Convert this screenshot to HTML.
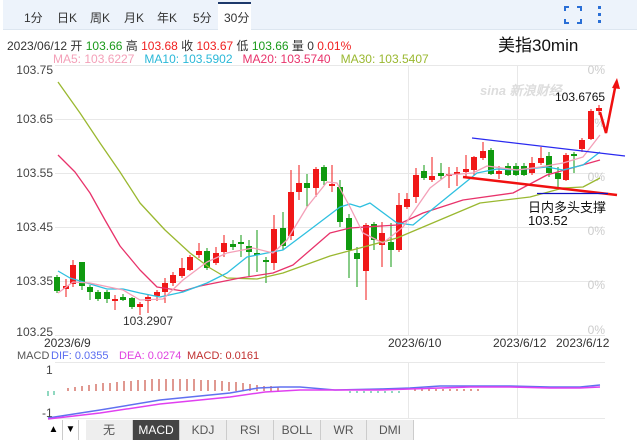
<!DOCTYPE html>
<html><head><meta charset="utf-8"><style>
*{margin:0;padding:0;box-sizing:border-box}
body{width:640px;height:440px;background:#fff;font-family:"Liberation Sans","Noto Sans CJK SC",sans-serif;position:relative;overflow:hidden}
.top{position:absolute;left:3px;top:0;width:498px;height:30px;background:#edf3fb;border-bottom:1px solid #dde6f0}
.top2{position:absolute;left:501px;top:0;width:136px;height:30px;background:#edf3fb;border-bottom:1px solid #dde6f0}
.tab{position:absolute;top:9px;font-size:12px;color:#333}
.sel{position:absolute;left:218px;top:2px;width:33px;height:29px;background:#fff;border-top:2px solid #1f3a6b}
.t{position:absolute;white-space:nowrap}
.bt{position:absolute;top:420px;height:20px;font-size:12px;color:#555;text-align:center;line-height:20px;background:#eee;border-right:1px solid #ccc}
</style></head><body>
<div class="top"></div><div class="top2"></div>
<div class="sel"></div>
<div class="tab" style="left:24px">1分</div>
<div class="tab" style="left:57px">日K</div>
<div class="tab" style="left:90px">周K</div>
<div class="tab" style="left:124px">月K</div>
<div class="tab" style="left:157px">年K</div>
<div class="tab" style="left:193px">5分</div>
<div class="tab" style="left:224px">30分</div>
<svg style="position:absolute;left:0;top:0" width="640" height="440">
<g stroke="#2a6fd6" stroke-width="2" fill="none"><path d="M565 11V7h4M577 7h4v4M581 19v4h-4M569 23h-4v-4"/></g>
<g fill="#2a6fd6"><rect x="598" y="6" width="3" height="3"/><rect x="598" y="13" width="3" height="3"/><rect x="598" y="20" width="3" height="3"/></g>
</svg>
<div class="t" style="left:7px;top:37px;font-size:12px;color:#333">2023/06/12 开 <span style="color:#1a9a1a">103.66</span> 高 <span style="color:#f02020">103.68</span> 收 <span style="color:#f02020">103.67</span> 低 <span style="color:#1a9a1a">103.66</span> 量 0 <span style="color:#f02020">0.01%</span></div>
<div class="t" style="left:498px;top:31px;font-size:17px;color:#111">美指30min</div>
<div class="t" style="left:53px;top:52px;font-size:12px"><span style="color:#f4a0b8">MA5: 103.6227</span>&nbsp;&nbsp; <span style="color:#2ab8d8">MA10: 103.5902</span>&nbsp;&nbsp; <span style="color:#e8336b">MA20: 103.5740</span>&nbsp;&nbsp; <span style="color:#9ab830">MA30: 103.5407</span></div>
<svg style="position:absolute;left:0;top:0" width="640" height="440" font-family="Liberation Sans, sans-serif">
<g stroke="#e8e8e8" stroke-width="1">
<line x1="55" y1="65.5" x2="605" y2="65.5"/><line x1="55" y1="119.5" x2="605" y2="119.5"/><line x1="55" y1="173.5" x2="605" y2="173.5"/><line x1="55" y1="227.5" x2="605" y2="227.5"/><line x1="55" y1="281.5" x2="605" y2="281.5"/><line x1="55" y1="335.5" x2="605" y2="335.5"/>
<line x1="408.5" y1="65" x2="408.5" y2="335"/><line x1="517.5" y1="65" x2="517.5" y2="335"/>
<line x1="408.5" y1="362" x2="408.5" y2="418"/><line x1="517.5" y1="362" x2="517.5" y2="418"/>
<line x1="55" y1="362.5" x2="605" y2="362.5"/><line x1="55" y1="418.5" x2="605" y2="418.5"/>
</g>
<g font-size="12" fill="#444" text-anchor="end">
<text x="53" y="74">103.75</text><text x="53" y="123">103.65</text><text x="53" y="177">103.55</text><text x="53" y="231">103.45</text><text x="53" y="285">103.35</text><text x="53" y="336">103.25</text>
</g>
<g font-size="12" fill="#ccc" text-anchor="end">
<text x="605" y="74">0%</text><text x="605" y="127">0%</text><text x="605" y="181">0%</text><text x="605" y="235">0%</text><text x="605" y="289">0%</text><text x="605" y="334">0%</text>
</g>
<text x="480" y="95" font-size="13" font-style="italic" font-weight="bold" fill="#ddd">sina 新浪财经</text>
<g id="c"></g>
<g fill="none" stroke-width="1.3" stroke-linejoin="round">
<polyline stroke="#9ab830" points="58,82 80,113 100,143 120,172 140,203 165,230 190,253 210,268 227,278 257,279 283,273 330,256 397,238 480,203 530,197 563,188 583,187 600,178"/>
<polyline stroke="#e8336b" points="58,155 75,172 90,193 105,220 120,246 140,270 157,287 183,291 200,286 240,278 273,273 293,265 330,233 350,228 397,225 423,213 463,200 513,193 547,175 600,160"/>
<polyline stroke="#2ec0e0" points="58,271 70,278 107,289 123,289 140,293 160,297 183,292 207,283 227,273 247,257 267,253 283,250 307,232 340,207 350,204 360,207 370,203 397,223 413,225 440,203 477,173 497,169 517,170 547,167 563,170 583,165 600,152"/>
<polyline stroke="#f4a0b8" points="58,293 73,282 90,283 123,290 140,300 163,299 183,280 207,262 227,253 253,248 273,253 287,240 307,207 327,182 337,183 350,207 363,233 383,243 403,227 430,188 447,175 473,173 487,166 517,170 540,167 563,163 583,157 600,135"/>
</g>
<line x1="472" y1="138" x2="625" y2="156" stroke="#2a2af0" stroke-width="1.2"/>
<line x1="463" y1="177" x2="617" y2="195" stroke="#f01010" stroke-width="2.5"/>
<line x1="537" y1="193.5" x2="608" y2="193.5" stroke="#1010c0" stroke-width="1.2"/>
<polyline points="600,112 606,133 616,83" fill="none" stroke="#f01010" stroke-width="2.5"/>
<polygon points="617,78 612,88 620,89" fill="#f01010"/>
<text x="528" y="212" font-size="13" fill="#111" font-family="Liberation Sans, Noto Sans CJK SC, sans-serif">日内多头支撑</text>
<text x="528" y="225" font-size="13" fill="#111">103.52</text>
<text x="555" y="101" font-size="12" fill="#111">103.6765</text>
<text x="123" y="325" font-size="12" fill="#333">103.2907</text>
<g font-size="12" fill="#333">
<text x="44" y="347">2023/6/9</text><text x="388" y="347">2023/6/10</text><text x="493" y="347">2023/6/12</text><text x="556" y="347">2023/6/12</text>
</g>
<text x="17" y="359" font-size="11" fill="#555">MACD</text>
<text x="51" y="359" font-size="11" fill="#5a6cf0">DIF: 0.0355</text>
<text x="119" y="359" font-size="11" fill="#e040e0">DEA: 0.0274</text>
<text x="187" y="359" font-size="11" fill="#c03030">MACD: 0.0161</text>
<text x="46" y="374" font-size="12" fill="#444">1</text>
<text x="42" y="417" font-size="12" fill="#444">-1</text>
<g id="h"></g>
<polyline fill="none" stroke="#6070f0" stroke-width="1.5" points="48,418 100,410 160,400 230,393 258,388 280,387 300,387 335,390 380,389 410,388 440,386 470,386 510,386 550,387 580,387 600,385"/>
<polyline fill="none" stroke="#e040f0" stroke-width="1.5" points="48,419 100,413 160,404 230,397 265,392 300,390 335,390 380,390 410,389 440,388 470,387 510,387 550,388 580,388 600,387"/>
</svg>
<div class="bt" style="left:45px;width:18px;background:#fff;color:#000;font-size:10px">▲</div>
<div class="bt" style="left:63px;width:16px;background:#fff;color:#000;font-size:10px">▼</div>
<div class="bt" style="left:86px;width:47px">无</div>
<div class="bt" style="left:133px;width:47px;background:#444;color:#fff">MACD</div>
<div class="bt" style="left:180px;width:47px">KDJ</div>
<div class="bt" style="left:227px;width:47px">RSI</div>
<div class="bt" style="left:274px;width:47px">BOLL</div>
<div class="bt" style="left:321px;width:46px">WR</div>
<div class="bt" style="left:367px;width:47px">DMI</div>
<script>
var C=[[57,277,291,275,293,0],[66,286,289,279,297,1],[73,265,284,260,287,1],[82,262,286,262,290,0],[90,287,292,285,300,0],[98,292,299,290,301,0],[107,292,299,290,303,0],[115,299,300,295,310,1],[123,297,300,294,301,0],[132,298,307,297,309,0],[140,304,307,302,315,1],[148,297,301,295,313,1],[157,292,296,290,301,1],[165,283,292,278,303,1],[173,275,283,272,286,1],[182,268,276,258,278,1],[190,257,270,255,271,1],[199,251,255,243,258,1],[207,251,268,248,270,0],[216,253,263,247,265,1],[224,243,252,235,257,1],[233,244,247,240,250,0],[241,242,244,235,257,0],[249,246,252,240,277,0],[257,253,254,230,272,0],[266,260,262,257,283,0],[274,229,263,215,270,1],[283,228,246,212,250,0],[291,192,236,170,240,1],[299,183,192,165,200,1],[307,183,188,174,207,0],[316,169,188,167,197,1],[324,167,181,165,185,0],[332,184,186,165,192,1],[340,187,222,180,227,0],[349,218,250,214,278,0],[357,253,259,247,287,0],[366,225,271,223,300,1],[374,224,240,222,250,0],[382,233,245,222,267,1],[391,242,250,223,267,0],[399,205,250,193,252,1],[407,199,207,193,209,1],[416,175,197,168,203,1],[424,171,178,165,180,0],[432,176,180,157,182,1],[441,173,176,163,180,0],[449,174,176,167,188,1],[457,172,173,167,186,1],[466,169,172,155,177,1],[474,157,170,156,175,1],[483,151,158,142,160,1],[491,150,174,148,175,0],[499,171,174,166,179,1],[508,166,175,163,176,0],[516,166,175,163,176,0],[524,166,175,163,176,0],[532,163,173,157,175,1],[541,158,163,147,165,1],[549,156,173,152,177,0],[558,173,179,167,187,0],[566,155,180,153,181,1],[574,154,156,152,173,0],[582,140,149,138,152,1],[591,111,139,109,140,1],[599,108,111,105,115,1]];
var s='';C.forEach(function(c){var col=c[5]?'#f01818':'#109a10';s+='<line x1="'+c[0]+'" y1="'+c[3]+'" x2="'+c[0]+'" y2="'+c[4]+'" stroke="'+col+'" stroke-width="1"/><rect x="'+(c[0]-3)+'" y="'+c[1]+'" width="6" height="'+Math.max(2,c[2]-c[1])+'" fill="'+col+'"/>';});
document.getElementById('c').innerHTML=s;
var h='';for(var x=68;x<=278;x+=7){var v=Math.round(10*Math.sin(Math.PI*(x-60)/230))+2;h+='<line x1="'+x+'" y1="'+(391-v)+'" x2="'+x+'" y2="391" stroke="#c03020"/>';}
for(var x=350;x<=405;x+=7)h+='<line x1="'+x+'" y1="391" x2="'+x+'" y2="393" stroke="#20b080"/>';
for(var x=415;x<=480;x+=7)h+='<line x1="'+x+'" y1="389" x2="'+x+'" y2="391" stroke="#c03020"/>';
h+='<line x1="48" y1="391" x2="48" y2="396" stroke="#20b080"/><line x1="54" y1="391" x2="54" y2="395" stroke="#20b080"/>';
document.getElementById('h').innerHTML=h;
</script>
</body></html>
